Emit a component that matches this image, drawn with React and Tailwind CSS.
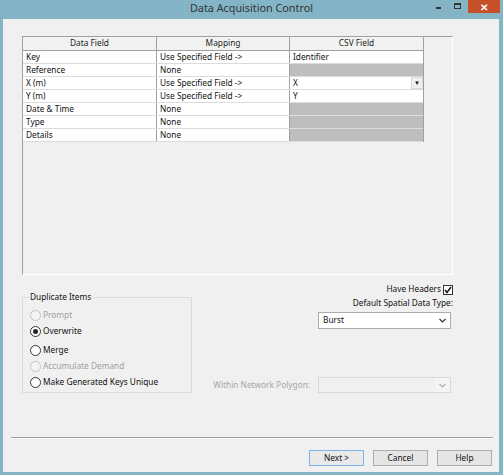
// Data Acquisition Control dialog
import React, { useState } from "react";

const rows = [
  { field: "Key", mapping: "Use Specified Field ->", csv: "Identifier" },
  { field: "Reference", mapping: "None", csv: null },
  { field: "X (m)", mapping: "Use Specified Field ->", csv: "X", combo: true },
  { field: "Y (m)", mapping: "Use Specified Field ->", csv: "Y" },
  { field: "Date & Time", mapping: "None", csv: null },
  { field: "Type", mapping: "None", csv: null },
  { field: "Details", mapping: "None", csv: null },
];

const radios = [
  { label: "Prompt", disabled: true },
  { label: "Overwrite" },
  { label: "Merge" },
  { label: "Accumulate Demand", disabled: true },
  { label: "Make Generated Keys Unique" },
];

const Chevron = ({ color = "#333" }) => (
  <svg width="7" height="5" viewBox="0 0 7 5">
    <path d="M0.5 1 L3.5 4 L6.5 1" fill="none" stroke={color} strokeWidth="1.2" />
  </svg>
);

const Radio = ({ label, checked, disabled, onClick }) => (
  <div className="flex items-center h-[14px] gap-[2px]" onClick={disabled ? undefined : onClick}>
    <span
      className={`w-[11px] h-[11px] rounded-full border flex items-center justify-center ${
        disabled ? "border-[#c4c4c4] bg-[#f4f4f4]" : "border-[#333] bg-white"
      }`}
    >
      {checked && <span className="w-[5px] h-[5px] rounded-full bg-[#222]" />}
    </span>
    <span className={disabled ? "text-[#a0a0a0]" : "text-[#111]"}>{label}</span>
  </div>
);

export default function App() {
  const [dup, setDup] = useState("Overwrite");
  const [headers, setHeaders] = useState(true);

  return (
    <div
      className="w-[503px] h-[475px] bg-[#84b5c7] flex flex-col text-[8.3px] leading-none"
      style={{ fontFamily: '"Noto Sans", sans-serif' }}
    >
      {/* Title bar */}
      <div className="h-[19px] flex items-start relative">
        <div className="flex-1 text-center text-[10.8px] text-[#333] pt-[3px]">Data Acquisition Control</div>
        <div className="absolute right-[3px] top-0 flex items-start">
          <div className="w-[5px] h-[2px] bg-[#333] mt-[7px] mr-[13px]" />
          <div className="w-[7px] h-[6px] border border-[#333] border-t-2 mt-[3px] mr-[7px]" />
          <div className="w-[32px] h-[13px] bg-[#c7502b] flex items-center justify-center text-white text-[10px] font-bold">
            ✕
          </div>
        </div>
      </div>

      {/* Client area */}
      <div className="ml-[3px] mr-[4px] h-[453px] bg-[#f0f0f0] flex flex-col">
        {/* Grid panel */}
        <div className="mt-[17px] ml-[19px] w-[431px] h-[239px] border-t border-l border-[#a0a0a0] border-r border-b border-r-white border-b-white">
          <div className="w-[401px] border-r border-[#a0a0a0]">
            <div className="flex h-[14px] border-b border-[#a0a0a0] bg-[#f2f2f2] text-[#222]">
              <div className="w-[134px] flex items-center justify-center border-r border-[#a0a0a0]">Data Field</div>
              <div className="w-[133px] flex items-center justify-center border-r border-[#a0a0a0]">Mapping</div>
              <div className="flex-1 flex items-center justify-center">CSV Field</div>
            </div>
            {rows.map((r) => (
              <div key={r.field} className="flex h-[13px] border-b border-[#dcdcdc] text-[#111]">
                <div className="w-[134px] bg-white flex items-center pl-[3px] border-r border-[#a0a0a0]">{r.field}</div>
                <div className="w-[133px] bg-white flex items-center pl-[3px] border-r border-[#a0a0a0]">{r.mapping}</div>
                {r.csv === null ? (
                  <div className="flex-1 bg-[#bebebe]" />
                ) : (
                  <div className="flex-1 bg-white flex items-center pl-[3px]">
                    <span className="flex-1">{r.csv}</span>
                    {r.combo && (
                      <span className="w-[12px] h-[12px] bg-[#f0f0f0] border border-[#d8d8d8] flex items-center justify-center text-[6px]">
                        ▼
                      </span>
                    )}
                  </div>
                )}
              </div>
            ))}
          </div>
        </div>

        {/* Lower options */}
        <div className="flex h-[162px]">
          <fieldset className="ml-[19px] mt-[18px] w-[170px] h-[100px] border border-[#dcdcdc] px-[7px] pt-[7px]">
            <legend className="ml-[-1px] px-[1px] text-[#111]">Duplicate Items</legend>
            <div className="flex flex-col gap-[2px]">
              {radios.map((r, i) => (
                <div key={r.label} className={i === 2 ? "mt-[3px]" : ""}>
                  <Radio
                    label={r.label}
                    disabled={r.disabled}
                    checked={dup === r.label}
                    onClick={() => setDup(r.label)}
                  />
                </div>
              ))}
            </div>
          </fieldset>

          <div className="w-[261px] flex flex-col items-end pt-[9px] text-[#111]">
            <div className="flex items-center gap-[2px] h-[11px]">
              <span>Have Headers</span>
              <span
                className="w-[10px] h-[10px] border border-[#333] bg-white flex items-center justify-center"
                onClick={() => setHeaders(!headers)}
              >
                {headers && (
                  <svg width="8" height="8" viewBox="0 0 8 8">
                    <path d="M1 4 L3 6.5 L7 1" fill="none" stroke="#111" strokeWidth="1.4" />
                  </svg>
                )}
              </span>
            </div>
            <div className="mt-[3px] h-[10px] flex items-center">Default Spatial Data Type:</div>
            <div className="mt-[4px] mr-[2px] w-[133px] h-[17px] bg-white border border-[#acacac] flex items-center pl-[4px] pr-[4px]">
              <span className="flex-1">Burst</span>
              <Chevron />
            </div>
            <div className="mt-[48px] mr-[2px] flex items-center">
              <span className="text-[#a6a6a6] mr-[8px]">Within Network Polygon:</span>
              <div className="w-[133px] h-[16px] bg-[#f4f4f4] border border-[#d9d9d9] flex items-center pr-[4px]">
                <span className="flex-1 h-full bg-[#f0f0f0]" />
                <span className="ml-[4px]">
                  <Chevron color="#b0b0b0" />
                </span>
              </div>
            </div>
          </div>
        </div>

        {/* Separator */}
        <div className="ml-[8px] w-[482px] h-[1px] bg-[#a0a0a0] border-b border-white box-content" />

        {/* Buttons */}
        <div className="flex justify-end gap-[9px] mr-[7px] mt-[11px]">
          <button className="w-[55px] h-[16px] border border-[#7eb4ea] bg-[#e9e9e9] text-[#111] text-[8.3px] leading-none">
            Next &gt;
          </button>
          <button className="w-[55px] h-[16px] border border-[#adadad] bg-[#e5e5e5] text-[#111] text-[8.3px] leading-none">
            Cancel
          </button>
          <button className="w-[55px] h-[16px] border border-[#adadad] bg-[#e5e5e5] text-[#111] text-[8.3px] leading-none">
            Help
          </button>
        </div>
      </div>
    </div>
  );
}
